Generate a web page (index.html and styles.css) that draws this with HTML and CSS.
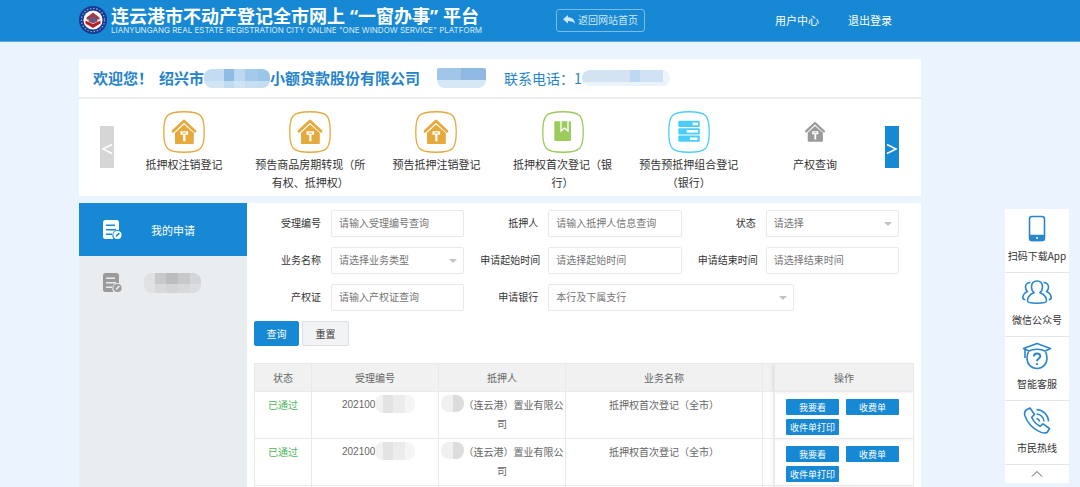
FILE: index.html
```html
<!DOCTYPE html>
<html lang="zh-CN">
<head>
<meta charset="utf-8">
<title>连云港市不动产登记全市网上“一窗办事”平台</title>
<link rel="stylesheet" href="styles.css">
</head>
<body>
<svg class="defs" width="0" height="0" aria-hidden="true">
  <symbol id="frame" viewBox="0 0 42 42"><path d="M21 .75C38 .75 41.25 4 41.25 21S38 41.25 21 41.25.75 38 .75 21 4 .75 21 .75Z" fill="none" stroke="currentColor" stroke-width="1.3"/></symbol>
  <symbol id="house" viewBox="0 0 42 42">
    <path d="M10 20.300 21 9.900l11 10.400" fill="none" stroke="currentColor" stroke-width="2.800" stroke-linecap="round" stroke-linejoin="round"/>
    <path d="M12 22 21 13.600l9.800 8.400V32q0 1-1 1H13q-1 0-1-1Z" fill="currentColor"/>
    <path d="M17.500 20.200h7.600v3.600h-2.600v6.400h-2.300v-6.400h-2.700Z" fill="#fff"/>
    <path d="M19.500 21.500h3.600v1h-3.600Z" fill="currentColor"/>
  </symbol>
  <symbol id="doc" viewBox="0 0 20 20">
    <path d="M2.500 0H13.500Q16 0 16 2.500V10.300A5.200 5.200 0 0 0 9.500 17L10.300 19H2.500Q0 19 0 16.500V2.500Q0 0 2.500 0Z" fill="currentColor"/>
    <path d="M3 5.200H12M3 9.700H13M3 14.200H9" stroke="var(--line)" stroke-width="1.400" fill="none"/>
    <circle cx="14.500" cy="15" r="4.100" fill="currentColor"/>
    <path d="m12.700 16.900.5-1.800 2.600-2.700 1.200 1.200-2.600 2.700Z" fill="var(--line)"/>
  </symbol>
</svg>

<header class="topbar">
  <div class="brand">
    <svg class="logo" viewBox="0 0 28 28" aria-hidden="true">
      <circle cx="14" cy="14" r="14" fill="#16388f"/>
      <circle cx="14" cy="14" r="11.600" fill="none" stroke="#8ea6da" stroke-width="1.200" stroke-dasharray="1.500 1.700"/>
      <circle cx="14" cy="14" r="9.600" fill="#fff"/>
      <path d="m14 6.500 6.500 5v2h-13v-2Z" fill="#a23b48"/>
      <path d="M6.500 14.500 14 18l7.500-3.500v3L14 22l-7.500-4.500Z" fill="#b3202c"/>
      <path d="M9.500 12.500h9v3L14 17.500l-4.500-2Z" fill="#7c5269"/>
      <circle cx="14" cy="13" r="1.800" fill="#3e62b4"/>
    </svg>
    <div>
      <h1 class="title">连云港市不动产登记全市网上<span class="quoted">“一窗办事”</span>平台</h1>
      <p class="subtitle">LIANYUNGANG REAL ESTATE REGISTRATION CITY ONLINE "ONE WINDOW SERVICE" PLATFORM</p>
    </div>
  </div>
  <a class="back" href="#">
    <svg width="12" height="10" viewBox="0 0 12 10" aria-hidden="true"><path d="M5 0v2.300c4 0 6.500 2 7 6.700C10.500 6.700 8.500 6 5 6v2.500L0 4.200Z" fill="currentColor"/></svg>
    返回网站首页
  </a>
  <nav class="usernav"><a href="#">用户中心</a><a href="#">退出登录</a></nav>
</header>

<div class="page">
  <main class="main">
    <section class="panel">
      <div class="welcome">
        <strong class="hello">欢迎您！</strong>
        <strong>绍兴市</strong><span class="mask mask-company"></span><strong>小额贷款股份有限公司</strong>
        <span class="mask mask-user"></span>
        <span class="tel">联系电话：1</span><span class="mask mask-tel"></span>
      </div>
      <div class="carousel">
        <button class="arrow arrow-off" type="button" aria-label="上一页"><svg viewBox="0 0 14 14"><path d="M12 2.500 3 7l9 4.500"/></svg></button>
        <ul class="services">
          <li><a class="service gold" href="#"><svg viewBox="0 0 42 42"><use href="#frame"/><use href="#house"/></svg><span>抵押权注销登记</span></a></li>
          <li><a class="service gold" href="#"><svg viewBox="0 0 42 42"><use href="#frame"/><use href="#house"/></svg><span>预告商品房期转现（所有权、抵押权）</span></a></li>
          <li><a class="service gold" href="#"><svg viewBox="0 0 42 42"><use href="#frame"/><use href="#house"/></svg><span>预告抵押注销登记</span></a></li>
          <li><a class="service green" href="#"><svg viewBox="0 0 42 42"><use href="#frame"/><rect x="12.300" y="10.300" width="16.700" height="19.700" rx="1" fill="currentColor"/><path d="M19 10v10l3.500-3 3.500 3V10" fill="none" stroke="#fff" stroke-width="1.300"/></svg><span>抵押权首次登记（银行）</span></a></li>
          <li><a class="service cyan" href="#"><svg viewBox="0 0 42 42"><use href="#frame"/><g fill="currentColor"><rect x="10.300" y="9.800" width="21.500" height="6.200" rx="1"/><rect x="10.300" y="17.200" width="21.500" height="6.200" rx="1"/><rect x="10.300" y="24.600" width="21.500" height="6.200" rx="1"/></g><g fill="#fff"><rect x="24.700" y="11.600" width="5.300" height="2.600"/><rect x="18.700" y="19" width="11.300" height="2.600"/><rect x="22" y="26.400" width="7.500" height="2.600"/></g></svg><span>预告预抵押组合登记（银行）</span></a></li>
          <li><a class="service gray" href="#"><svg viewBox="0 0 42 42"><use href="#house" x="4" y="4" width="34" height="34"/></svg><span>产权查询</span></a></li>
        </ul>
        <button class="arrow" type="button" aria-label="下一页"><svg viewBox="0 0 14 14"><path d="m2 2.500 9 4.500-9 4.500"/></svg></button>
      </div>
    </section>

    <div class="workspace">
      <nav class="side">
        <a class="side-item active" href="#"><svg viewBox="0 0 20 20"><use href="#doc"/></svg>我的申请</a>
        <a class="side-item" href="#" aria-label="其他"><svg viewBox="0 0 20 20"><use href="#doc"/></svg><span class="mask mask-side"></span></a>
      </nav>
      <section class="content">
        <form class="filters">
          <label for="no">受理编号</label><input id="no" type="text" placeholder="请输入受理编号查询">
          <label for="person">抵押人</label><input id="person" type="text" placeholder="请输入抵押人信息查询">
          <label for="state">状态</label><div class="select"><select id="state"><option>请选择</option></select></div>
          <label for="biz">业务名称</label><div class="select"><select id="biz"><option>请选择业务类型</option></select></div>
          <label for="from">申请起始时间</label><input id="from" type="text" placeholder="请选择起始时间">
          <label for="to">申请结束时间</label><input id="to" type="text" placeholder="请选择结束时间">
          <label for="cert">产权证</label><input id="cert" type="text" placeholder="请输入产权证查询">
          <label for="bank">申请银行</label><div class="wide"><div class="select"><select id="bank"><option>本行及下属支行</option></select></div></div>
          <div class="buttons"><button class="btn primary" type="button">查询</button><button class="btn" type="reset">重置</button></div>
        </form>

        <table class="records">
          <colgroup><col class="c-state"><col class="c-no"><col class="c-person"><col><col class="c-gap"><col class="c-ops"></colgroup>
          <thead><tr><th>状态</th><th>受理编号</th><th>抵押人</th><th>业务名称</th><th></th><th class="ops">操作</th></tr></thead>
          <tbody>
            <tr>
              <td class="passed">已通过</td>
              <td class="num">202100<span class="mask mask-num"></span></td>
              <td><span class="mask mask-person"></span>（连云港）置业有限公司</td>
              <td>抵押权首次登记（全市）</td><td></td>
              <td class="ops"><div class="op-list"><button type="button">我要看</button><button type="button">收费单</button><button type="button">收件单打印</button></div></td>
            </tr>
            <tr>
              <td class="passed">已通过</td>
              <td class="num">202100<span class="mask mask-num"></span></td>
              <td><span class="mask mask-person"></span>（连云港）置业有限公司</td>
              <td>抵押权首次登记（全市）</td><td></td>
              <td class="ops"><div class="op-list"><button type="button">我要看</button><button type="button">收费单</button><button type="button">收件单打印</button></div></td>
            </tr>
            <tr class="rest"><td></td><td></td><td></td><td></td><td></td><td class="ops"></td></tr>
          </tbody>
        </table>
      </section>
    </div>
  </main>

  <aside class="dock">
    <a href="#"><svg viewBox="0 0 30 30"><rect x="7.500" y="2.500" width="15" height="24" rx="2.500"/><path d="M8 21.500h14v3.500q0 1.500-1.500 1.500h-11Q8 26.500 8 25Z" fill="currentColor"/><circle cx="15" cy="24" r="1" fill="#fff" stroke="none"/></svg>扫码下载App</a>
    <a href="#"><svg viewBox="0 0 30 30"><path d="M15 3c-3.500 0-5.500 2.500-5.500 6 0 2.500 1 4.500 2.500 5.700-3.800 1.500-6.500 4.300-6.500 8.300 0 3 19 3 19 0 0-4-2.700-6.800-6.500-8.300 1.500-1.200 2.500-3.200 2.500-5.700 0-3.500-2-6-5.500-6Z"/><path d="M8.500 4.500C5.500 4.300 3.500 6.500 3.500 9c0 2 .8 3.500 2 4.500C2.500 14.800.8 17 .8 20c0 1 1 1.500 2.500 1.800M21.500 4.500c3-.2 5 2 5 4.500 0 2-.8 3.500-2 4.500 3 1.300 4.700 3.500 4.700 6.500 0 1-1 1.500-2.500 1.800"/></svg>微信公众号</a>
    <a href="#"><svg viewBox="0 0 30 30"><path d="M15 1.500 1.500 6.500 7 9c4-2.300 12-2.300 16 0l5.500-2.500ZM3 7.500V16M6.500 10c-1.300 2-1.500 4-1.500 6 0 6.500 4.500 10.500 10 10.500S25 22.500 25 16c0-2-.2-4-1.500-6"/><path d="M12 14.500c0-4 6.300-4 6.300-.3 0 2.300-3.300 2.500-3.300 5M15 21.300v1.700" stroke-width="2"/></svg>智能客服</a>
    <a href="#"><svg viewBox="0 0 30 30"><path d="M5 3.500 8 2l4.500 6.500-2.800 2.800c1.500 3.700 4.500 7 8.300 9l3-2.500 6.500 4.700-2 3.500c-2 1.500-5.500 1-8.500-.6C10.500 22.300 5.500 16.500 3 10 2 7 2.800 4.800 5 3.500ZM14.500 12.500c1.700.3 2.700 1.300 3 3M14.500 8c4 .2 7.300 3.300 7.500 7.500M14.500 3.500c6.500.2 11.700 5.300 12 12"/></svg>市民热线</a>
    <a class="to-top" href="#" aria-label="返回顶部"><svg viewBox="0 0 12 8"><path d="m1 6.500 5-5 5 5"/></svg></a>
  </aside>
</div>
</body>
</html>
```
FILE: styles.css
```css
* { box-sizing: border-box; }

:root {
  --blue: #1788d3;
  --border: #e9e9e9;
}

body {
  margin: 0;
  min-height: 100vh;
  display: flex;
  flex-direction: column;
  background: #eaf3fe;
  color: #333;
  font: 10px/18px "Noto Sans CJK SC", sans-serif;
}

a { color: inherit; text-decoration: none; }
button, input, select { font: inherit; margin: 0; }
h1, p, ul { margin: 0; padding: 0; }
.defs { position: absolute; }

.topbar {
  display: flex;
  align-items: center;
  height: 42px;
  padding: 0 188px 2px 79px;
  background: var(--blue);
  border-bottom: 1px solid #5aadea;
  color: #fff;
}
.brand { display: flex; align-items: center; gap: 4px; flex: 0 0 477px; white-space: nowrap; }
.logo { width: 28px; height: 28px; flex: none; }
.title { font-size: 18px; line-height: 20px; font-weight: 700; }
.quoted { font-family: "Noto Sans", "Noto Sans CJK SC", sans-serif; margin: 0 5px; }
.subtitle { font: 8px/8px Inter, sans-serif; color: #d6ebfa; }
.back {
  display: flex;
  align-items: center;
  gap: 3px;
  margin-top: 2px;
  padding: 1px 6px 2px;
  border: 1px solid #79bdea;
  border-radius: 3px;
  color: #cfe8f9;
  white-space: nowrap;
}
.usernav { display: flex; gap: 29px; margin-left: auto; font-size: 11px; white-space: nowrap; }

.page { flex: 1; display: flex; gap: 84px; padding: 17px 11px 0 79px; }
.main { flex: 1; min-width: 0; display: flex; flex-direction: column; gap: 7px; }
.panel { background: #fff; }

.welcome {
  display: flex;
  align-items: center;
  height: 40px;
  padding-left: 14px;
  border-bottom: 2px solid #ececec;
  color: #2583cc;
  font-size: 15px;
  white-space: nowrap;
}
.hello { margin-right: 6px; }
.tel { margin-left: 18px; font-size: 14px; }

.mask { display: inline-block; flex: none; border-radius: 8px; }
.mask-company { width: 66px; height: 19px; background: linear-gradient(180deg, transparent 0 65%, #d6e8f5b0 65%), linear-gradient(90deg, #c4dcf1 0 30%, #8fbce4 30% 46%, #bcd9f0 46% 62%, #a4cae9 62% 82%, #9cc6e8 82%); }
.mask-user { width: 49px; height: 20px; margin-left: 17px; border-radius: 2px 2px 8px 8px; background: linear-gradient(180deg, transparent 0 60%, #d6e8f5 60%), linear-gradient(90deg, #a1c7e8 0 50%, #8fb9e1 50%); }
.mask-tel { width: 88px; height: 16px; background: linear-gradient(180deg, transparent 0 75%, #eaf3fa 75%), linear-gradient(90deg, #d3e3f2 0 54%, #bfd8f1 54% 66%, #cfe1f2 66% 92%, #edf4fb 92%); }
.mask-side { width: 57px; height: 20px; background: linear-gradient(180deg, transparent 0 55%, #e0e2e4a0 55%), linear-gradient(90deg, #dfe1e4 0 20%, #c8c9cb 20% 38%, #bcbdbf 38% 60%, #c6c8ca 60% 80%, #d3d6d9 80%); }
.mask-num { width: 40px; height: 18px; vertical-align: top; background: linear-gradient(90deg, #f1f1f1 0 20%, #e3e3e3 20% 45%, #ececec 45% 75%, #f5f5f5 75%); }
.mask-person { width: 23px; height: 17px; vertical-align: top; background: linear-gradient(90deg, #f0f0f0 0 50%, #dcdcdc 50%); }

.carousel { display: flex; gap: 7px; padding: 12px 22px 5px 21px; }
.arrow {
  align-self: flex-start;
  display: flex;
  align-items: center;
  flex: none;
  width: 14px;
  height: 42px;
  margin-top: 15px;
  padding: 3px 0 0;
  border: 0;
  background: var(--blue);
}
.arrow-off { background: #d6d6d6; }
.arrow svg { width: 14px; height: 14px; fill: none; stroke: #fff; stroke-width: 1.5; }
.services { flex: 1; display: grid; grid-template-columns: repeat(6, 1fr); list-style: none; }
.service { display: flex; flex-direction: column; align-items: center; gap: 2px; padding: 0 5px; }
.service svg { width: 42px; height: 42px; }
.service span { max-width: 112px; font-size: 11px; text-align: center; color: #333; }
.gold { color: #e5a93c; }
.green { color: #9bcb5d; }
.cyan { color: #4bcdfb; }
.gray { color: #9b9b9b; }

.workspace { flex: 1; display: flex; }
.side { flex: 0 0 168px; background: #e9edf0; }
.side-item { --line: #e9edf0; display: flex; align-items: center; height: 53px; padding-left: 24px; color: #9b9b9b; font-size: 11px; }
.side-item svg { width: 20px; height: 20px; margin-right: 21px; }
.side-item.active { --line: var(--blue); background: var(--blue); color: #fff; }
.side-item.active svg { margin-right: 28px; }
.content { flex: 1; min-width: 0; padding: 7px 7px 0; background: #fff; }

.filters {
  display: grid;
  grid-template-columns: 77px 1fr 84px 1fr 84px 1fr;
  row-gap: 10px;
  align-items: center;
  padding-right: 15px;
}
.filters label { padding: 0 10px 2px 0; text-align: right; white-space: nowrap; }
.filters label[for="from"], .filters label[for="to"] { padding-right: 8px; }
.filters input, .filters select {
  display: block;
  width: 100%;
  height: 27px;
  padding: 0 7px 2px;
  border: 1px solid var(--border);
  border-radius: 2px;
  background: #fff;
  color: #757575;
  appearance: none;
  outline: 0;
}
.filters input::placeholder { color: #757575; opacity: 1; }
.select { position: relative; }
.select::after {
  content: "";
  position: absolute;
  right: 7px;
  top: 12px;
  border: 4px solid transparent;
  border-top-color: #c2c2c2;
  border-bottom: 0;
  pointer-events: none;
}
.wide { grid-column: span 3; }
.wide .select { width: 70%; }
.buttons { grid-column: 1 / -1; display: flex; gap: 3px; }
.btn { width: 47px; height: 25px; padding: 0; border: 1px solid #dcdfe3; border-radius: 2px; background: #f2f3f5; color: #444; }
.btn.primary { width: 45px; border-color: var(--blue); background: var(--blue); color: #fff; }

.records { width: 100%; margin-top: 17px; table-layout: fixed; border-collapse: collapse; color: #666; line-height: 19px; }
.c-state { width: 57px; }
.c-no, .c-person { width: 127px; }
.c-gap { width: 12px; }
.c-ops { width: 139px; }
.records th, .records td { border: 1px solid var(--border); padding: 4px 1px; font-weight: 400; text-align: center; vertical-align: top; }
.records td { padding: 3px 1px 5px; }
.records th { background: #f1f1f1; }
.records td.passed { color: #4cb85a; }
.records td.num { padding-left: 30px; text-align: left; font-family: "Liberation Sans", sans-serif; white-space: nowrap; }
.records .ops { box-shadow: -2px 0 3px #0000001a; }
.records td.ops { padding: 7px 0 0 11px; }
.op-list { display: flex; flex-wrap: wrap; gap: 4px 7px; }
.op-list button { width: 53px; height: 16px; padding: 0; border: 0; border-radius: 1px; background: var(--blue); color: #fff; font-size: 9px; line-height: 15px; }
.records .rest td { height: 2px; padding: 0; border-bottom: 0; }

.dock { flex: 0 0 64px; display: flex; flex-direction: column; gap: 1px; align-self: flex-start; margin-top: 150px; background: #e3e6ea; }
.dock a { display: flex; flex-direction: column; align-items: center; gap: 3px; padding: 5px 0 7px; background: #fff; white-space: nowrap; }
.dock svg { width: 30px; height: 30px; color: #2b86cb; fill: none; stroke: currentColor; stroke-width: 1.6; stroke-linejoin: round; }
.dock .to-top { padding: 5px 0; }
.dock .to-top svg { width: 12px; height: 8px; color: #555; stroke-width: 1; }
```
